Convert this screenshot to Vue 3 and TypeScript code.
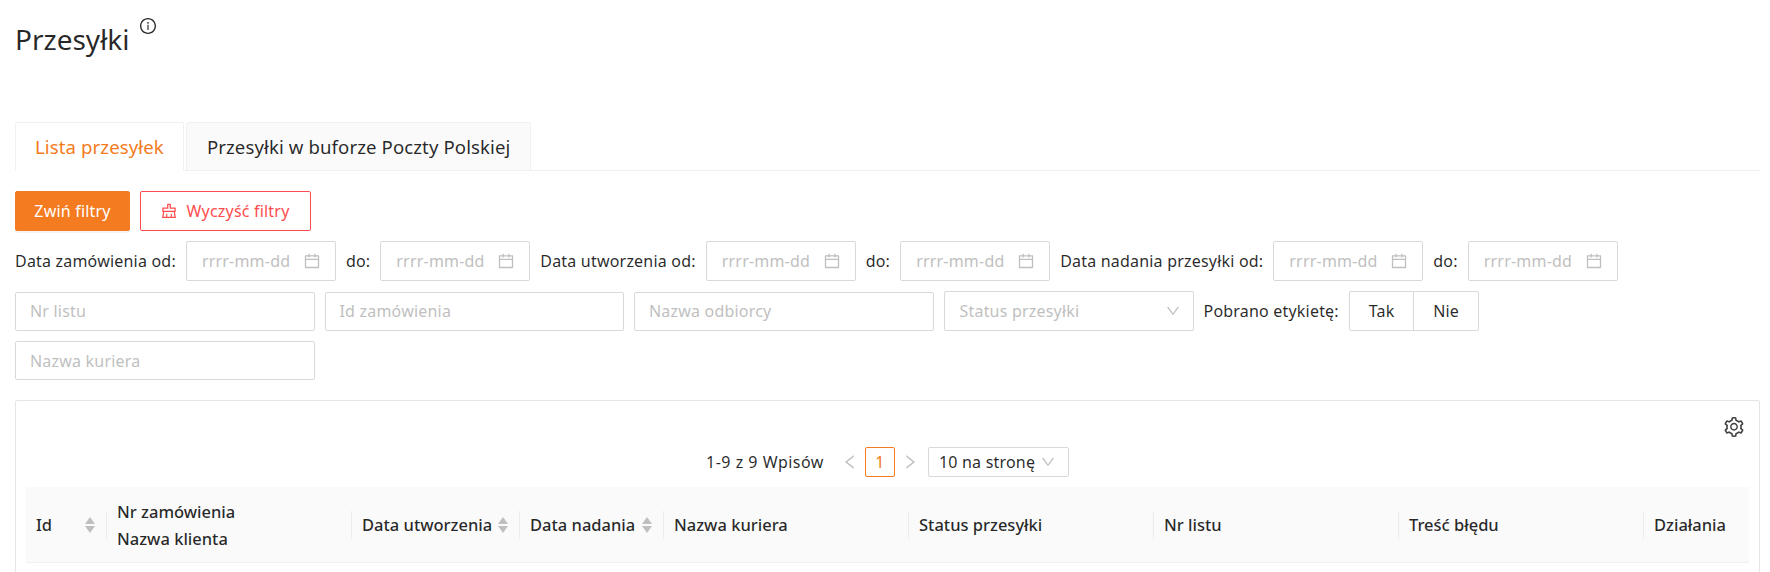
<template>
  <div class="page">
    <header class="head">
      <h1 class="title">Przesyłki</h1>
      <svg class="info" viewBox="64 64 896 896" fill="currentColor">
        <path d="M512 64C264.6 64 64 264.6 64 512s200.6 448 448 448 448-200.6 448-448S759.4 64 512 64zm0 820c-205.4 0-372-166.6-372-372s166.6-372 372-372 372 166.6 372 372-166.6 372-372 372z" />
        <path d="M464 336a48 48 0 1096 0 48 48 0 10-96 0zm72 112h-48c-4.4 0-8 3.6-8 8v272c0 4.4 3.6 8 8 8h48c4.4 0 8-3.6 8-8V456c0-4.4-3.6-8-8-8z" />
      </svg>
    </header>

    <nav class="tabs">
      <div class="tab active">Lista przesyłek</div>
      <div class="tab">Przesyłki w buforze Poczty Polskiej</div>
    </nav>

    <div class="actions">
      <button class="btn primary">Zwiń filtry</button>
      <button class="btn danger">
        <svg class="broom" viewBox="64 64 896 896" fill="currentColor">
          <path d="M899.1 869.6l-53-305.6H864c14.4 0 26-11.6 26-26V346c0-14.4-11.6-26-26-26H618V138c0-14.4-11.6-26-26-26H432c-14.4 0-26 11.6-26 26v182H160c-14.4 0-26 11.6-26 26v192c0 14.4 11.6 26 26 26h17.9l-53 305.6a25.95 25.95 0 0025.6 30.4h723c1.5 0 3-.1 4.4-.4a25.88 25.88 0 0021.2-30zM204 390h272V182h72v208h272v104H204V390zm468 440V674c0-4.4-3.6-8-8-8h-48c-4.4 0-8 3.6-8 8v156H416V674c0-4.4-3.6-8-8-8h-48c-4.4 0-8 3.6-8 8v156H202.8l45.1-260H776l45.1 260H672z" />
        </svg>
        Wyczyść filtry
      </button>
    </div>

    <div class="date-row">
      <template v-for="d in dateFilters" :key="d">
        <span class="label">{{ d }} od:</span>
        <div class="date">
          <span>rrrr-mm-dd</span>
          <svg class="cal" viewBox="64 64 896 896" fill="currentColor"><path :d="calendarPath" /></svg>
        </div>
        <span class="label">do:</span>
        <div class="date">
          <span>rrrr-mm-dd</span>
          <svg class="cal" viewBox="64 64 896 896" fill="currentColor"><path :d="calendarPath" /></svg>
        </div>
      </template>
    </div>

    <div class="input-row">
      <div class="input">Nr listu</div>
      <div class="input">Id zamówienia</div>
      <div class="input">Nazwa odbiorcy</div>
      <div class="select">
        <span>Status przesyłki</span>
        <svg class="chev" viewBox="64 64 896 896" fill="currentColor"><path :d="downPath" /></svg>
      </div>
      <span class="label">Pobrano etykietę:</span>
      <div class="toggle">
        <span>Tak</span>
        <span>Nie</span>
      </div>
    </div>
    <div class="input-row">
      <div class="input">Nazwa kuriera</div>
    </div>

    <section class="card">
      <div class="tools">
        <svg class="gear" viewBox="64 64 896 896" fill="currentColor">
          <path d="M924.8 625.7l-65.5-56c3.1-19 4.7-38.4 4.7-57.8s-1.6-38.8-4.7-57.8l65.5-56a32.03 32.03 0 009.3-35.2l-.9-2.6a443.74 443.74 0 00-79.7-137.9l-1.8-2.1a32.12 32.12 0 00-35.1-9.5l-81.3 28.9c-30-24.6-63.5-44-99.7-57.6l-15.7-85a32.05 32.05 0 00-25.8-25.7l-2.7-.5c-52.1-9.4-106.9-9.4-159 0l-2.7.5a32.05 32.05 0 00-25.8 25.7l-15.8 85.4a351.86 351.86 0 00-99 57.4l-81.9-29.1a32 32 0 00-35.1 9.5l-1.8 2.1a446.02 446.02 0 00-79.7 137.9l-.9 2.6c-4.5 12.5-.8 26.5 9.3 35.2l66.3 56.6c-3.1 18.8-4.6 38-4.6 57.1 0 19.2 1.5 38.4 4.6 57.1L99 625.5a32.03 32.03 0 00-9.3 35.2l.9 2.6c18.1 50.4 44.9 96.9 79.7 137.9l1.8 2.1a32.12 32.12 0 0035.1 9.5l81.9-29.1c29.8 24.5 63.1 43.9 99 57.4l15.8 85.4a32.05 32.05 0 0025.8 25.7l2.7.5a449.4 449.4 0 00159 0l2.7-.5a32.05 32.05 0 0025.8-25.7l15.7-85a350 350 0 0099.7-57.6l81.3 28.9a32 32 0 0035.1-9.5l1.8-2.1c34.8-41.1 61.6-87.5 79.7-137.9l.9-2.6c4.5-12.3.8-26.3-9.3-35zM788.3 465.9c2.5 15.1 3.8 30.6 3.8 46.1s-1.3 31-3.8 46.1l-6.6 40.1 74.7 63.9a370.03 370.03 0 01-42.6 73.6L721 702.8l-31.4 25.8c-23.9 19.6-50.5 35-79.3 45.8l-38.1 14.3-17.9 97a377.5 377.5 0 01-85 0l-17.9-97.2-37.8-14.5c-28.5-10.8-55-26.2-78.7-45.7l-31.4-25.9-93.4 33.2c-17-22.9-31.2-47.6-42.6-73.6l75.5-64.5-6.5-40c-2.4-14.9-3.7-30.3-3.7-45.5 0-15.3 1.2-30.6 3.7-45.5l6.5-40-75.5-64.5c11.3-26.1 25.6-50.7 42.6-73.6l93.4 33.2 31.4-25.9c23.7-19.5 50.2-34.9 78.7-45.7l37.9-14.3 17.9-97.2c28.1-3.2 56.8-3.2 85 0l17.9 97 38.1 14.3c28.7 10.8 55.4 26.2 79.3 45.8l31.4 25.8 92.8-32.9c17 22.9 31.2 47.6 42.6 73.6L781.8 426l6.5 39.9zM512 326c-97.2 0-176 78.8-176 176s78.8 176 176 176 176-78.8 176-176-78.8-176-176-176zm79.2 255.2A111.6 111.6 0 01512 614c-29.9 0-58-11.7-79.2-32.8A111.6 111.6 0 01400 502c0-29.9 11.7-58 32.8-79.2C454 401.6 482.1 390 512 390c29.9 0 58 11.6 79.2 32.8A111.6 111.6 0 01624 502c0 29.9-11.7 58-32.8 79.2z" />
        </svg>
      </div>

      <div class="pager">
        <span class="total">1-9 z 9 Wpisów</span>
        <svg class="arrow" viewBox="64 64 896 896" fill="currentColor">
          <path d="M724 218.3V141c0-6.7-7.7-10.4-12.9-6.3L260.3 486.8a31.86 31.86 0 000 50.3l450.8 352.1c5.3 4.1 12.9.4 12.9-6.3v-77.3c0-4.9-2.3-9.6-6.1-12.6l-360-281 360-281.1c3.8-3 6.1-7.7 6.1-12.6z" />
        </svg>
        <span class="page-no">1</span>
        <svg class="arrow" viewBox="64 64 896 896" fill="currentColor">
          <path d="M765.7 486.8L314.9 134.7A7.97 7.97 0 00302 141v77.3c0 4.9 2.3 9.6 6.1 12.6l360 281.1-360 281.1c-3.9 3-6.1 7.7-6.1 12.6V883c0 6.7 7.7 10.4 12.9 6.3l450.8-352.1a31.96 31.96 0 000-50.4z" />
        </svg>
        <div class="size">
          <span>10 na stronę</span>
          <svg class="chev" viewBox="64 64 896 896" fill="currentColor"><path :d="downPath" /></svg>
        </div>
      </div>

      <div class="thead">
        <div v-for="c in columns" :key="c.lines[0]" class="th">
          <div class="th-text">
            <div v-for="l in c.lines" :key="l">{{ l }}</div>
          </div>
          <span v-if="c.sort" class="sort">
            <i class="up" />
            <i class="down" />
          </span>
        </div>
      </div>
    </section>
  </div>
</template>

<script setup lang="ts">
interface Column {
  lines: string[]
  sort?: boolean
}

const dateFilters = ['Data zamówienia', 'Data utworzenia', 'Data nadania przesyłki']

const calendarPath =
  'M880 184H712v-64c0-4.4-3.6-8-8-8h-56c-4.4 0-8 3.6-8 8v64H384v-64c0-4.4-3.6-8-8-8h-56c-4.4 0-8 3.6-8 8v64H144c-17.7 0-32 14.3-32 32v664c0 17.7 14.3 32 32 32h736c17.7 0 32-14.3 32-32V216c0-17.7-14.3-32-32-32zm-40 656H184V460h656v380zM184 392V256h128v48c0 4.4 3.6 8 8 8h56c4.4 0 8-3.6 8-8v-48h256v48c0 4.4 3.6 8 8 8h56c4.4 0 8-3.6 8-8v-48h128v136H184z'
const downPath =
  'M884 256h-75c-5.1 0-9.9 2.5-12.9 6.6L512 654.2 227.9 262.6c-3-4.1-7.8-6.6-12.9-6.6h-75c-6.5 0-10.3 7.4-6.5 12.7l352.6 486.1c12.8 17.6 39 17.6 51.7 0l352.6-486.1c3.9-5.3.1-12.7-6.4-12.7z'

const columns: Column[] = [
  { lines: ['Id'], sort: true },
  { lines: ['Nr zamówienia', 'Nazwa klienta'] },
  { lines: ['Data utworzenia'], sort: true },
  { lines: ['Data nadania'], sort: true },
  { lines: ['Nazwa kuriera'] },
  { lines: ['Status przesyłki'] },
  { lines: ['Nr listu'] },
  { lines: ['Treść błędu'] },
  { lines: ['Działania'] },
]
</script>

<style>
html,
body {
  margin: 0;
  overflow: hidden;
  background: #fff;
}
</style>

<style scoped>
.page {
  padding: 0 10px 0 15px;
  font-family: "Noto Sans", "Open Sans", sans-serif;
  font-size: 16px;
  letter-spacing: 0.2px;
  color: rgba(0, 0, 0, 0.85);
}
.head {
  display: flex;
  align-items: flex-start;
  height: 122px;
  gap: 10px;
}
.title {
  margin: 20px 0 0;
  font-size: 28px;
  font-weight: 400;
  letter-spacing: 0;
  line-height: 38px;
}
.info {
  width: 16px;
  height: 16px;
  margin-top: 18px;
}
.tabs {
  display: flex;
  gap: 2px;
  height: 49px;
  box-sizing: border-box;
  border-bottom: 1px solid #f0f0f0;
}
.tab {
  padding: 0 20px;
  height: 49px;
  line-height: 47px;
  box-sizing: border-box;
  font-size: 18.6px;
  letter-spacing: 0.1px;
  background: #fafafa;
  border: 1px solid #f0f0f0;
  border-radius: 2px 2px 0 0;
}
.tab.active {
  padding: 0 19px;
  color: #f47b20;
  background: #fff;
  border-bottom-color: #fff;
}
.actions {
  display: flex;
  gap: 10px;
  margin-top: 20px;
}
.btn {
  display: flex;
  align-items: center;
  justify-content: center;
  gap: 9px;
  height: 40px;
  font: inherit;
  letter-spacing: inherit;
  border-radius: 2px;
  background: #fff;
  cursor: pointer;
}
.primary {
  width: 115px;
  color: #fff;
  background: #f47b20;
  border: 1px solid #f47b20;
  box-shadow: 0 2px 0 rgba(0, 0, 0, 0.045);
}
.danger {
  width: 171px;
  color: #ff4d4f;
  border: 1px solid #ff4d4f;
}
.broom {
  width: 16px;
  height: 16px;
}
.date-row,
.input-row {
  display: flex;
  align-items: center;
  gap: 10px;
  margin-top: 10px;
}
.label {
  white-space: nowrap;
}
.date,
.input,
.select,
.size {
  box-sizing: border-box;
  display: flex;
  align-items: center;
  background: #fff;
  border: 1px solid #d9d9d9;
  border-radius: 2px;
}
.date {
  justify-content: space-between;
  width: 150px;
  height: 40px;
  padding: 0 15px;
  color: #bfbfbf;
}
.cal {
  width: 16px;
  height: 16px;
  color: #bfbfbf;
}
.input {
  width: 299.5px;
  height: 39px;
  padding: 0 14px;
  color: #bfbfbf;
}
.select {
  justify-content: space-between;
  width: 250px;
  height: 40px;
  padding: 0 13px 0 15px;
  color: #bfbfbf;
}
.chev {
  width: 14px;
  height: 14px;
  color: #bfbfbf;
}
.toggle {
  display: flex;
  height: 40px;
  box-sizing: border-box;
  border: 1px solid #d9d9d9;
  border-radius: 2px;
}
.toggle span {
  display: flex;
  align-items: center;
  justify-content: center;
  width: 63.5px;
}
.toggle span + span {
  border-left: 1px solid #d9d9d9;
}
.card {
  box-sizing: border-box;
  margin-top: 20px;
  padding: 0 10px;
  height: 300px;
  border: 1px solid #e6e6e6;
  border-radius: 2px;
}
.tools {
  display: flex;
  justify-content: flex-end;
  padding: 16px 5px 0 0;
  height: 46px;
  box-sizing: border-box;
}
.gear {
  width: 20px;
  height: 20px;
  color: #434343;
}
.pager {
  display: flex;
  align-items: center;
  justify-content: center;
  height: 30px;
}
.total {
  margin-right: 18px;
  letter-spacing: 0.5px;
}
.arrow {
  width: 16px;
  height: 16px;
  color: #bfbfbf;
}
.page-no {
  box-sizing: border-box;
  width: 30px;
  height: 30px;
  margin: 0 7px;
  line-height: 28px;
  text-align: center;
  color: #f47b20;
  border: 1px solid #f47b20;
  border-radius: 2px;
}
.size {
  justify-content: space-between;
  width: 141px;
  height: 30px;
  margin-left: 10px;
  padding: 0 13px 0 10px;
}
.thead {
  display: grid;
  grid-template-columns: 81px 245px 168px 144px repeat(4, 245px) 106px;
  margin-top: 10px;
  height: 76px;
  box-sizing: border-box;
  background: #fafafa;
  border-bottom: 1px solid #f0f0f0;
}
.th {
  position: relative;
  display: flex;
  align-items: center;
  justify-content: space-between;
  padding: 0 5px 0 10px;
  font-weight: 500;
  font-size: 16.5px;
  letter-spacing: 0;
  line-height: 27px;
  white-space: nowrap;
}
.th:not(:last-child)::after {
  content: "";
  position: absolute;
  top: 50%;
  right: 0;
  width: 1px;
  height: 28px;
  transform: translateY(-50%);
  background: #ececec;
}
.sort {
  display: flex;
  flex-direction: column;
  gap: 2px;
  margin-right: 7px;
}
.sort i {
  width: 0;
  height: 0;
  border-left: 5px solid transparent;
  border-right: 5px solid transparent;
}
.sort .up {
  border-bottom: 7px solid #bfbfbf;
}
.sort .down {
  border-top: 7px solid #bfbfbf;
}
</style>
